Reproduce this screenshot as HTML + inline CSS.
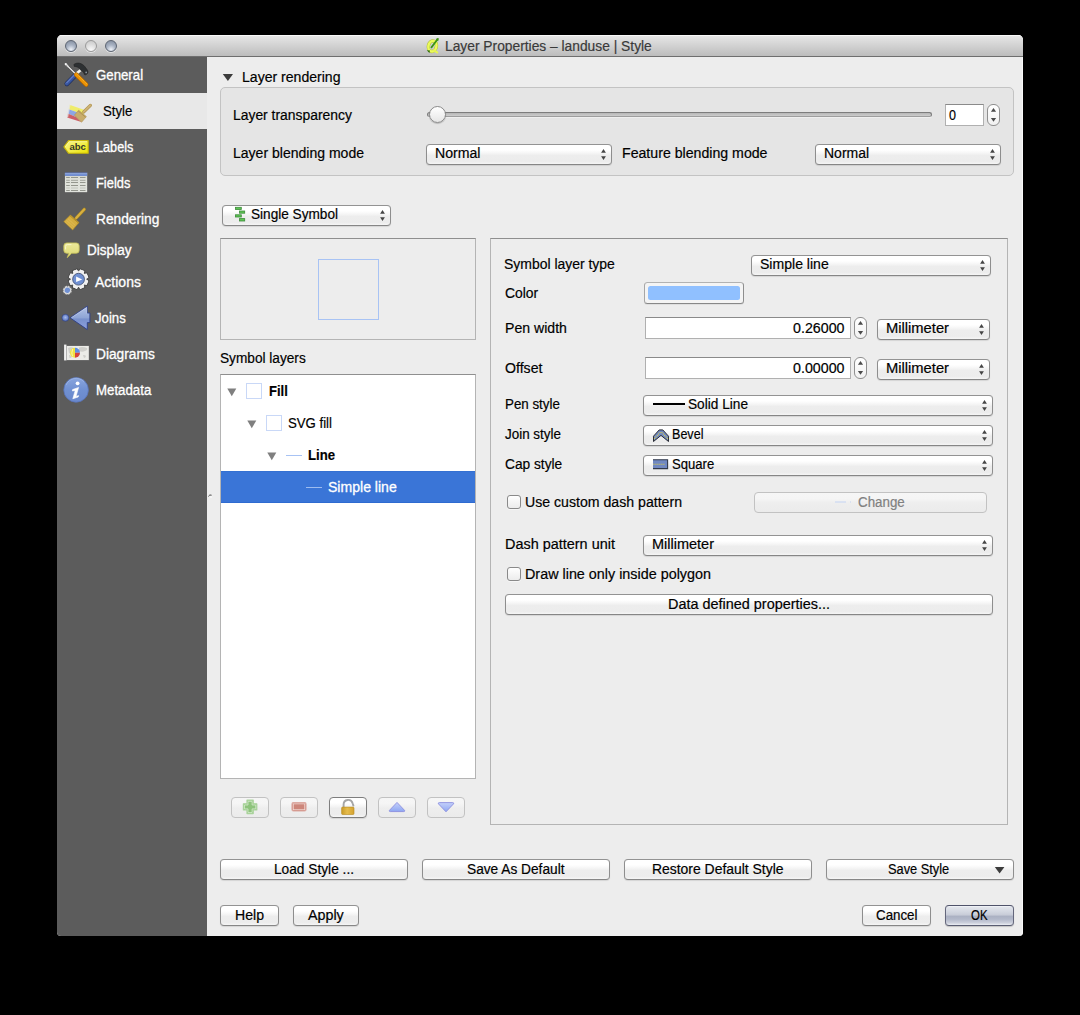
<!DOCTYPE html>
<html><head><meta charset="utf-8"><title>Layer Properties - landuse | Style</title>
<style>
html,body{margin:0;padding:0;background:#000;width:1080px;height:1015px;overflow:hidden}
body{font-family:"Liberation Sans",sans-serif;font-size:13px;position:relative}
.abs{position:absolute}
#win{position:absolute;left:57px;top:35px;width:966px;height:901px;background:#ededed;border-radius:5px 5px 4px 4px;overflow:hidden;box-shadow:inset -1px 0 0 #f8f8f8}
#tb{position:absolute;left:0;top:0;width:966px;height:22px;background:linear-gradient(#ebebeb 0,#e4e4e4 8%,#d0d0d0 55%,#bcbcbc 100%);box-shadow:inset 0 1px 0 #f8f8f8;border-bottom:1px solid #6e6e6e;box-sizing:border-box}
.tl{position:absolute;top:5px;width:12px;height:12px;border-radius:6px;box-sizing:border-box}
.tl.g{border:1px solid #5d6572;background:radial-gradient(circle at 50% 85%,#eef2f8 0,#aab4c4 45%,#7f8a9c 100%);box-shadow:0 1px 0 rgba(255,255,255,.5)}
.tl.e{border:1px solid #9a9a9a;background:radial-gradient(circle at 50% 90%,#fafafa 0,#dcdcdc 55%,#c6c6c6 100%);box-shadow:0 1px 0 rgba(255,255,255,.5)}
#sb{position:absolute;left:57px;top:57px;width:150px;height:879px;background:#5c5c5c;border-radius:0 0 0 4px}
#sel{position:absolute;left:57px;top:93px;width:150px;height:36px;background:#e8e8e8}
.t{position:absolute;white-space:nowrap;line-height:15px;height:15px;transform-origin:0 0;font-size:14px}
.t{-webkit-text-stroke:0.18px}.t.sb,.t.wb{-webkit-text-stroke:0.3px #fff}.t.sb{font-size:13.8px}
.grp{position:absolute;box-sizing:border-box;background:#e5e5e5;border:1px solid #c3c3c3;border-radius:5px}
.frm{position:absolute;box-sizing:border-box;border:1px solid #b4b4b4;border-top-color:#8f8f8f}
.frm.wht{background:#fff}
.cb{position:absolute;box-sizing:border-box;border:1px solid #8e8e8e;border-top-color:#939393;border-bottom-color:#868686;border-radius:4px;background:linear-gradient(#ffffff 0,#ffffff 26%,#f6f6f6 42%,#ededed 55%,#ececec 86%,#f5f5f5 100%);box-shadow:0 1px 1px rgba(0,0,0,.10)}
.cb.dis{border-color:#c2c2c2;background:linear-gradient(#f6f6f6 0,#f5f5f5 30%,#eeeeee 52%,#ebebeb 100%);box-shadow:none}
.cb.act{border-color:#7e7e7e}
.cb.ok{border-color:#50536a #64677c #5a5d72 #64677c;background:linear-gradient(#f4f6fa 0,#e1e4eb 8%,#d3d7e1 30%,#c7cbd7 48%,#aab0c2 53%,#b3b9ca 70%,#cbcfdb 88%,#eceef4 100%);box-shadow:0 1px 1px rgba(0,0,0,.18)}
.ar{position:absolute}
.inp{position:absolute;box-sizing:border-box;background:#fff;border:1px solid #b0b0b0;border-top-color:#8a8a8a}
.stp{position:absolute;box-sizing:border-box;border:1px solid #8f8f8f;border-radius:6px;background:linear-gradient(#fff,#f1f1f1)}
.chk{position:absolute;width:14px;height:14px;box-sizing:border-box;border:1px solid #8a8a8a;border-radius:3px;background:linear-gradient(#fff,#ececec);box-shadow:0 1px 0 rgba(255,255,255,.5)}
.trk{position:absolute;box-sizing:border-box;border-radius:2.5px;border:1px solid #7d7d7d;border-bottom-color:#9e9e9e;background:linear-gradient(#b6b6b6,#cdcdcd);box-shadow:0 1px 0 #efefef}
.knob{position:absolute;width:17px;height:17px;border-radius:9px;box-sizing:border-box;border:1px solid #8a8a8a;background:linear-gradient(#ffffff,#e6e6e6);box-shadow:0 1px 1px rgba(0,0,0,.2)}
</style></head>
<body>
<div id="win">
  <div id="tb">
    <div class="tl g" style="left:8px"></div><div class="tl e" style="left:28px"></div><div class="tl g" style="left:48px"></div>
  </div>
</div>
<div id="sb"></div><div id="sel"></div>
<div class="grp" style="left:220px;top:87px;width:794px;height:89px"></div>
<svg class="abs" style="left:222px;top:73px" width="12" height="9"><path d="M0.8 1 L11 1 L5.9 8 Z" fill="#3c3c3c"/></svg>
<div class="trk" style="left:427px;top:112px;width:505px;height:5px"></div>
<div class="knob" style="left:428.7px;top:106.4px"></div>
<div class="inp" style="left:945px;top:104px;width:39px;height:22px"></div>
<div class="stp" style="left:987px;top:104px;width:13px;height:22px"><svg style="position:absolute;left:2px;top:-1px" width="7" height="22" viewBox="0 0 7 22"><path d="M0.9 7.8 L3.5 4 L6.1 7.8 Z M0.9 14 L3.5 17.8 L6.1 14 Z" fill="#4a4a4a"/></svg></div>
<div class="cb " style="left:426px;top:144px;width:186px;height:21px"><svg class="ar" style="left:172.9px;top:0px" width="7" height="21" viewBox="0 0 7 21"><path d="M1.1 7.8 L3.5 4.1 L5.9 7.8 Z M1.1 11.2 L3.5 15 L5.9 11.2 Z" fill="#454545"/></svg></div>
<div class="cb " style="left:815px;top:144px;width:186px;height:21px"><svg class="ar" style="left:172.9px;top:0px" width="7" height="21" viewBox="0 0 7 21"><path d="M1.1 7.8 L3.5 4.1 L5.9 7.8 Z M1.1 11.2 L3.5 15 L5.9 11.2 Z" fill="#454545"/></svg></div>
<div class="cb " style="left:222px;top:205px;width:169px;height:21px"><svg class="ar" style="left:155.9px;top:0px" width="7" height="21" viewBox="0 0 7 21"><path d="M1.1 7.8 L3.5 4.1 L5.9 7.8 Z M1.1 11.2 L3.5 15 L5.9 11.2 Z" fill="#454545"/></svg></div>
<div class="frm" style="left:220px;top:238px;width:256px;height:102px"></div>
<div class="abs" style="left:318px;top:259px;width:61px;height:61px;border:1px solid #a8c3f4;box-sizing:border-box"></div>
<div class="frm wht" style="left:220px;top:374px;width:256px;height:405px"></div>
<div class="abs" style="left:221px;top:471px;width:254px;height:32px;background:#3a75d7;box-shadow:inset 0 1px 0 #3470d2, inset 0 -1px 0 #2f6bd0"></div>
<svg class="abs" style="left:227px;top:387.5px" width="10" height="9"><path d="M0.3 0.6 L9.3 0.6 L4.8 8.2 Z" fill="#7f7f7f"/></svg>
<svg class="abs" style="left:247px;top:419.5px" width="10" height="9"><path d="M0.3 0.6 L9.3 0.6 L4.8 8.2 Z" fill="#7f7f7f"/></svg>
<svg class="abs" style="left:267px;top:451.5px" width="10" height="9"><path d="M0.3 0.6 L9.3 0.6 L4.8 8.2 Z" fill="#7f7f7f"/></svg>
<div class="abs" style="left:246px;top:383px;width:16px;height:16px;box-sizing:border-box;border:1px solid #c9d8f7;background:#fff"></div>
<div class="abs" style="left:266px;top:415px;width:16px;height:16px;box-sizing:border-box;border:1px solid #c9d8f7;background:#fff"></div>
<div class="abs" style="left:286px;top:455px;width:16px;height:1px;background:#a8c3f4"></div>
<div class="abs" style="left:306px;top:487px;width:16px;height:1px;background:#9dbcf0"></div>
<div class="cb dis" style="left:231px;top:797px;width:38px;height:21px"></div>
<div class="cb dis" style="left:280px;top:797px;width:38px;height:21px"></div>
<div class="cb act" style="left:329px;top:797px;width:38px;height:21px"></div>
<div class="cb dis" style="left:378px;top:797px;width:38px;height:21px"></div>
<div class="cb dis" style="left:427px;top:797px;width:38px;height:21px"></div>
<div class="frm" style="left:490px;top:238px;width:518px;height:587px"></div>
<div class="cb " style="left:751px;top:255px;width:240px;height:21px"><svg class="ar" style="left:226.9px;top:0px" width="7" height="21" viewBox="0 0 7 21"><path d="M1.1 7.8 L3.5 4.1 L5.9 7.8 Z M1.1 11.2 L3.5 15 L5.9 11.2 Z" fill="#454545"/></svg></div>
<div class="cb" style="left:644px;top:282px;width:100px;height:22px;background:#f4f4f4;border-color:#b2b2b2 #8e8e8e #888 #a6a6a6;border-radius:3.5px;box-shadow:0 1px 0 rgba(0,0,0,.06)"><div style="position:absolute;left:3px;top:2.5px;right:2.6px;bottom:2.8px;background:#90c0ff;border-radius:2.5px"></div></div>
<div class="inp" style="left:645px;top:317px;width:206px;height:22px"></div>
<div class="stp" style="left:854px;top:317px;width:13px;height:22px"><svg style="position:absolute;left:2px;top:-1px" width="7" height="22" viewBox="0 0 7 22"><path d="M0.9 7.8 L3.5 4 L6.1 7.8 Z M0.9 14 L3.5 17.8 L6.1 14 Z" fill="#4a4a4a"/></svg></div>
<div class="cb " style="left:877px;top:319px;width:113px;height:21px"><svg class="ar" style="left:99.9px;top:0px" width="7" height="21" viewBox="0 0 7 21"><path d="M1.1 7.8 L3.5 4.1 L5.9 7.8 Z M1.1 11.2 L3.5 15 L5.9 11.2 Z" fill="#454545"/></svg></div>
<div class="inp" style="left:645px;top:357px;width:206px;height:22px"></div>
<div class="stp" style="left:854px;top:357px;width:13px;height:22px"><svg style="position:absolute;left:2px;top:-1px" width="7" height="22" viewBox="0 0 7 22"><path d="M0.9 7.8 L3.5 4 L6.1 7.8 Z M0.9 14 L3.5 17.8 L6.1 14 Z" fill="#4a4a4a"/></svg></div>
<div class="cb " style="left:877px;top:359px;width:113px;height:21px"><svg class="ar" style="left:99.9px;top:0px" width="7" height="21" viewBox="0 0 7 21"><path d="M1.1 7.8 L3.5 4.1 L5.9 7.8 Z M1.1 11.2 L3.5 15 L5.9 11.2 Z" fill="#454545"/></svg></div>
<div class="cb " style="left:643px;top:395px;width:350px;height:21px"><svg class="ar" style="left:336.9px;top:0px" width="7" height="21" viewBox="0 0 7 21"><path d="M1.1 7.8 L3.5 4.1 L5.9 7.8 Z M1.1 11.2 L3.5 15 L5.9 11.2 Z" fill="#454545"/></svg></div>
<div class="cb " style="left:643px;top:425px;width:350px;height:21px"><svg class="ar" style="left:336.9px;top:0px" width="7" height="21" viewBox="0 0 7 21"><path d="M1.1 7.8 L3.5 4.1 L5.9 7.8 Z M1.1 11.2 L3.5 15 L5.9 11.2 Z" fill="#454545"/></svg></div>
<div class="cb " style="left:643px;top:455px;width:350px;height:21px"><svg class="ar" style="left:336.9px;top:0px" width="7" height="21" viewBox="0 0 7 21"><path d="M1.1 7.8 L3.5 4.1 L5.9 7.8 Z M1.1 11.2 L3.5 15 L5.9 11.2 Z" fill="#454545"/></svg></div>
<div class="abs" style="left:653px;top:403px;width:32px;height:2px;background:#000"></div>
<div class="chk" style="left:507px;top:495px"></div>
<div class="cb dis" style="left:754px;top:492px;width:233px;height:21px"></div>
<div class="cb " style="left:643px;top:535px;width:350px;height:21px"><svg class="ar" style="left:336.9px;top:0px" width="7" height="21" viewBox="0 0 7 21"><path d="M1.1 7.8 L3.5 4.1 L5.9 7.8 Z M1.1 11.2 L3.5 15 L5.9 11.2 Z" fill="#454545"/></svg></div>
<div class="chk" style="left:507px;top:567px"></div>
<div class="cb " style="left:505px;top:594px;width:488px;height:21px"></div>
<div class="cb " style="left:220px;top:859px;width:188px;height:21px"></div>
<div class="cb " style="left:422px;top:859px;width:188px;height:21px"></div>
<div class="cb " style="left:624px;top:859px;width:188px;height:21px"></div>
<div class="cb " style="left:826px;top:859px;width:188px;height:21px"></div>
<svg class="abs" style="left:994px;top:866px" width="12" height="8"><path d="M0.8 1 L10.4 1 L5.6 7.4 Z" fill="#3c3c3c"/></svg>
<div class="cb " style="left:220px;top:905px;width:59px;height:21px"></div>
<div class="cb " style="left:293px;top:905px;width:66px;height:21px"></div>
<div class="cb " style="left:862px;top:905px;width:69px;height:21px"></div>
<div class="cb ok" style="left:945px;top:905px;width:69px;height:21px"></div>
<svg class="abs" style="left:0;top:0" width="1080" height="1015" viewBox="0 0 1080 1015">
<defs>
 <linearGradient id="gBlueH" x1="0" y1="0" x2="1" y2="1"><stop offset="0" stop-color="#6f8ad0"/><stop offset=".5" stop-color="#3c5aa6"/><stop offset="1" stop-color="#25407f"/></linearGradient>
 <linearGradient id="gOr" x1="0" y1="1" x2="1" y2="0"><stop offset="0" stop-color="#d87c00"/><stop offset=".6" stop-color="#f09a08"/><stop offset="1" stop-color="#f6b020"/></linearGradient>
 <linearGradient id="gTag" x1="0" y1="0" x2="1" y2="1"><stop offset="0" stop-color="#f8f588"/><stop offset=".5" stop-color="#f2ee50"/><stop offset="1" stop-color="#ebe300"/></linearGradient>
 <linearGradient id="gHdr" x1="0" y1="0" x2="0" y2="1"><stop offset="0" stop-color="#8aa4dc"/><stop offset="1" stop-color="#5f7fcc"/></linearGradient>
 <linearGradient id="gTbl" x1="0" y1="0" x2="0" y2="1"><stop offset="0" stop-color="#c9cbc3"/><stop offset=".35" stop-color="#dfe1da"/><stop offset="1" stop-color="#e2e4de"/></linearGradient>
 <linearGradient id="gArr" x1="0" y1="0" x2="0" y2="1"><stop offset="0" stop-color="#b4c4e6"/><stop offset=".5" stop-color="#8ea4d6"/><stop offset=".55" stop-color="#7890cc"/><stop offset="1" stop-color="#8ea0de"/></linearGradient>
 <radialGradient id="gDot" cx=".5" cy=".45" r=".6"><stop offset="0" stop-color="#a8bcec"/><stop offset=".6" stop-color="#6f88cc"/><stop offset="1" stop-color="#3c54a0"/></radialGradient>
 <linearGradient id="gInfo" x1="0" y1="0" x2="0" y2="1"><stop offset="0" stop-color="#8aa6de"/><stop offset=".5" stop-color="#7090d2"/><stop offset="1" stop-color="#6a88cc"/></linearGradient>
 <linearGradient id="gLock" x1="0" y1="0" x2="1" y2="0"><stop offset="0" stop-color="#c99a28"/><stop offset=".45" stop-color="#e6bc4c"/><stop offset="1" stop-color="#d4a230"/></linearGradient>
 <linearGradient id="gUp" x1="0" y1="0" x2="0" y2="1"><stop offset="0" stop-color="#c4d0fa"/><stop offset="1" stop-color="#8ea6f2"/></linearGradient>
 <linearGradient id="gBub" x1="0" y1="0" x2="0" y2="1"><stop offset="0" stop-color="#ece99a"/><stop offset="1" stop-color="#dcd872"/></linearGradient>
</defs>

<!-- title QGIS icon -->
<g>
 <ellipse cx="432.4" cy="46.2" rx="4" ry="5.3" fill="none" stroke="#aebb3c" stroke-width="3.4" transform="rotate(14 432.4 46.2)"/>
 <ellipse cx="432.4" cy="46.2" rx="4" ry="5.3" fill="none" stroke="#ebfa5c" stroke-width="2.5" transform="rotate(14 432.4 46.2)"/>
 <path d="M433.8 50.4 L437.2 52.4" stroke="#e6f452" stroke-width="2.2" stroke-linecap="round"/>
 <path d="M437.6 39.2 L431.4 47.4" stroke="#3c9414" stroke-width="1.8" stroke-linecap="round"/>
 <path d="M435.6 39 L438.6 38 L438.2 41.2 Z" fill="#3c9414"/>
 <path d="M426.8 50.2 L430 50.4 L429.4 53 Z" fill="#2a6a0c"/>
</g>

<!-- General: screwdriver + hammer -->
<g>
 <path d="M74.9 75.6 L66.9 83.7" stroke="#1d2c5c" stroke-width="4.8" stroke-linecap="round"/>
 <path d="M74.9 75.6 L66.9 83.7" stroke="url(#gBlueH)" stroke-width="3.6" stroke-linecap="round"/>
 <path d="M74.2 75.2 L67 82.6" stroke="#7d96d8" stroke-width="1" stroke-linecap="round" opacity=".8"/>
 <path d="M76.3 73.7 L80.4 70.2" stroke="#f2f2ea" stroke-width="2.6"/>
 <path d="M73.9 64.4 C77.4 62 82 63 84.8 66.6 C86.2 68.6 88 70.4 88 72 C87.9 73.8 85.8 75.4 84.4 74.6 C84 72.4 82.4 71.4 80.6 69.6 C78.8 67.6 76.8 66.4 74.2 66.4 Z" fill="#2d3032" stroke="#222" stroke-width=".6"/>
 <circle cx="86.2" cy="72.4" r=".9" fill="#8a959c"/>
 <path d="M65.7 64 L67.9 66.3" stroke="#f4f4f4" stroke-width="2.1" stroke-linecap="round"/>
 <path d="M66.6 65 L75.4 73.8" stroke="#3a3a3a" stroke-width="2.2"/>
 <path d="M66.6 65 L75.4 73.8" stroke="#eeeeee" stroke-width="1.3"/>
 <path d="M76.2 74.6 L86.2 84.6" stroke="#a85e00" stroke-width="4.4" stroke-linecap="round"/>
 <path d="M76.2 74.6 L86.2 84.6" stroke="url(#gOr)" stroke-width="3.4" stroke-linecap="round"/>
 <path d="M77.6 74.6 L86.8 83.8" stroke="#f8c040" stroke-width=".9" stroke-dasharray="1.2 .8" opacity=".9"/>
</g>

<!-- Style: paint stripes + brush -->
<g>
 <path d="M69.4 104.8 L84.6 109.9 L83.4 114.4 L68.6 109.3 Z" fill="#efec6a"/>
 <path d="M68.6 109.3 L80 113.2 L76.6 117.2 L67.7 113.6 Z" fill="#8da6e4"/>
 <path d="M67.7 113.6 L76.6 117.2 L81.4 122 L67 117.4 Z" fill="#cc5f66"/>
 <path d="M69.4 104.8 L67 117.4" stroke="#e8e8e8" stroke-width="2.2" opacity=".75"/>
 <path d="M83.8 111.8 L90.4 105.3" stroke="#a98c46" stroke-width="3.1" stroke-linecap="round"/>
 <path d="M83.8 111.8 L90.4 105.3" stroke="#cdb274" stroke-width="2.1" stroke-linecap="round"/>
 <path d="M78.6 110.2 L86.4 116.6 L81.6 122.2 L74.4 115.2 Z" fill="#c9ad6c" stroke="#b09452" stroke-width=".6"/>
 <path d="M78.2 111 L85.6 117.2" stroke="#ad914e" stroke-width=".9"/>
</g>

<!-- Labels tag -->
<g>
 <path d="M63.9 146.9 L68.6 140.6 L88.2 140.6 L88.2 153.3 L68.6 153.3 Z" fill="url(#gTag)" stroke="#c8b60a" stroke-width="1.1" stroke-linejoin="round"/>
 <path d="M65.2 146.9 L69.1 141.7 L87.1 141.7" fill="none" stroke="#fbf9b0" stroke-width=".8" opacity=".9"/>
 <text x="69.4" y="149.8" font-family="Liberation Sans, sans-serif" font-weight="700" font-size="9.4" fill="#33352a" textLength="16.4" lengthAdjust="spacingAndGlyphs">abc</text>
</g>

<!-- Fields table -->
<g>
 <rect x="64.4" y="172" width="23.2" height="20.6" fill="#4e4e4e" opacity=".55"/>
 <rect x="64.9" y="172.3" width="22.3" height="19.9" fill="url(#gTbl)"/>
 <rect x="64.9" y="172.2" width="22.3" height="1" fill="#4a5a8c"/>
 <rect x="64.9" y="173.1" width="22.3" height="2.8" fill="url(#gHdr)"/>
 <g stroke="#8b8d85" stroke-width=".9">
  <path d="M66.2 177.5h3.6M71 177.5h7M80 177.5h5.5"/>
  <path d="M66.2 180.3h3.6M71 180.3h7M80 180.3h5.5" opacity=".8"/>
  <path d="M66.2 182.5h3.6M71 182.5h7M80 182.5h5.5"/>
  <path d="M66.2 185.5h3.6M71 185.5h7M80 185.5h5.5"/>
  <path d="M66.2 188h3.6M71 188h7M80 188h5.5" opacity=".4"/>
  <path d="M66.2 190.5h3.6M71 190.5h7M80 190.5h5.5"/>
 </g>
</g>

<!-- Rendering brush -->
<g>
 <path d="M76.2 218 L84.3 209.3" stroke="#a8841c" stroke-width="3.2" stroke-linecap="round"/>
 <path d="M76.2 218 L84.3 209.3" stroke="#d8b040" stroke-width="2.2" stroke-linecap="round"/>
 <path d="M70.4 215 L79 222.4 L72.7 230 L63.8 221.6 Z" fill="#d6ae40" stroke="#b08a20" stroke-width=".6"/>
 <path d="M70 215.8 L78.4 223" stroke="#b48e24" stroke-width="1"/>
 <path d="M65 221.8 L72.6 228.8 M66.4 220.2 L74 227.2 M67.8 218.6 L75.4 225.6" stroke="#e6c868" stroke-width=".6" opacity=".8"/>
</g>

<!-- Display bubble -->
<g>
 <path d="M66.8 242.9 H76.2 Q79.2 242.9 79.2 245.9 V250.3 Q79.2 253.3 76.2 253.3 H71.6 L67.2 257.7 L68.8 253.3 H66.8 Q63.8 253.3 63.8 250.3 V245.9 Q63.8 242.9 66.8 242.9 Z" fill="url(#gBub)" stroke="#c2bc58" stroke-width=".8"/>
 <path d="M65.6 249 V246.4 Q65.6 244.6 67.4 244.6 H71" fill="none" stroke="#f8f6cc" stroke-width="1" stroke-linecap="round"/>
</g>

<!-- Actions gears -->
<g>
 <g transform="translate(78.56 279.2) rotate(22.5)">
  <g fill="#f0f0f0" stroke="#454545" stroke-width="1"><path id="gt" d="M-2.5 -10.1 L2.5 -10.1 L3.3 -7 L-3.3 -7 Z"/><use href="#gt" transform="rotate(45)"/><use href="#gt" transform="rotate(90)"/><use href="#gt" transform="rotate(135)"/><use href="#gt" transform="rotate(180)"/><use href="#gt" transform="rotate(225)"/><use href="#gt" transform="rotate(270)"/><use href="#gt" transform="rotate(315)"/></g>
  <circle r="8.3" fill="#f0f0f0" stroke="#454545" stroke-width=".9"/>
  <g fill="#f0f0f0"><path id="gt2" d="M-2.1 -9.7 L2.1 -9.7 L2.9 -6.6 L-2.9 -6.6 Z"/><use href="#gt2" transform="rotate(45)"/><use href="#gt2" transform="rotate(90)"/><use href="#gt2" transform="rotate(135)"/><use href="#gt2" transform="rotate(180)"/><use href="#gt2" transform="rotate(225)"/><use href="#gt2" transform="rotate(270)"/><use href="#gt2" transform="rotate(315)"/></g>
 </g>
 <circle cx="78.56" cy="279.2" r="5.9" fill="#7090d2" stroke="#3c4a6c" stroke-width=".8"/>
 <path d="M76.1 276.5 L82.2 279.4 L76.1 282.1 Z" fill="#fff"/>
 <g transform="translate(67.4 290.3) rotate(22.5)">
  <g fill="#dedede" stroke="#555" stroke-width=".5"><path id="st" d="M-1.2 -4.6 L1.2 -4.6 L1.6 -3 L-1.6 -3 Z"/><use href="#st" transform="rotate(45)"/><use href="#st" transform="rotate(90)"/><use href="#st" transform="rotate(135)"/><use href="#st" transform="rotate(180)"/><use href="#st" transform="rotate(225)"/><use href="#st" transform="rotate(270)"/><use href="#st" transform="rotate(315)"/></g>
  <circle r="3.7" fill="#dedede"/>
  <circle r="2.7" fill="#7090d2"/>
 </g>
</g>

<!-- Joins arrow -->
<g>
 <circle cx="65.4" cy="317.8" r="3.5" fill="url(#gDot)" stroke="#2c3e80" stroke-width=".5"/>
 <path d="M70 317.8 L87.3 306.1 L87.3 313 L89.9 313 L89.9 322.6 L87.3 322.6 L87.3 329.6 Z" fill="url(#gArr)" stroke="#2e4088" stroke-width=".9" stroke-linejoin="round"/>
 <path d="M71.5 317.6 L86.6 307.6 L86.6 313.4" fill="none" stroke="#ccd8f0" stroke-width=".7" opacity=".8"/>
</g>

<!-- Diagrams -->
<g>
 <rect x="63.7" y="344.3" width="3.1" height="16.5" fill="#6e6e6e" opacity=".5"/>
 <rect x="66.4" y="345.6" width="22.8" height="14.9" fill="#8a8a8a" opacity=".6"/>
 <rect x="64.1" y="344.6" width="2.3" height="15.8" fill="#f2f2f2"/>
 <rect x="66.8" y="346" width="22" height="14" fill="#ecece8"/>
 <path d="M68 348 q3 -1.4 6 0 q1 2 -1 4 q-2 3 -4 1 Z M79 347.5 q4 -1 8 .5 q1 2 -2 3 q-3 1.5 -6 0 Z M83 355 q2 -.5 3 1 q-.5 2 -2 2 Z M69 355 q2 -.5 3 1.5 q-1 2 -2.5 1.5 Z" fill="#d0d0cc"/>
 <path d="M75 352.7 L75 347.7 A5 5 0 0 0 75 357.7 Z" fill="#f0e240"/>
 <path d="M72.6 349 Q71.2 352.6 72.6 356.4" stroke="#f8f2a0" stroke-width="1.2" fill="none"/>
 <path d="M75 352.7 L75 347.7 A5 5 0 0 1 80 352.7 Z" fill="#5f90e4"/>
 <path d="M75 352.7 L80 352.7 A5 5 0 0 1 75 357.7 Z" fill="#d4423c"/>
</g>

<!-- Metadata info -->
<g>
 <circle cx="76.1" cy="389.9" r="12.3" fill="url(#gInfo)" stroke="#5874ba" stroke-width=".8"/>
 <path d="M66 385 A11 11 0 0 1 84 381.6" fill="none" stroke="#a4baea" stroke-width="1" opacity=".7"/>
 <circle cx="77.6" cy="383.3" r="1.9" fill="#fff"/>
 <path d="M72.6 389.6 L78.6 387.4 L76 396.4 L78.6 395.6 L78.2 397 L72.8 398.8 L75.2 390.4 L72.4 391 Z" fill="#fff" stroke="#fff" stroke-width=".6" stroke-linejoin="round"/>
</g>

<!-- Single Symbol icon -->
<g fill="#5ec354" stroke="#3c8c3a" stroke-width=".8">
 <rect x="235.5" y="207.3" width="5.8" height="2.2"/>
 <rect x="239.5" y="211" width="5.2" height="2.2"/>
 <rect x="235.5" y="214.8" width="5.8" height="2.2"/>
 <rect x="239.5" y="218.6" width="5.2" height="2.4"/>
</g>

<!-- Bevel icon -->
<g>
 <path d="M653.5 441.5 L653.5 436.2 L659.2 429.9 L662.8 429.9 L668.5 436.2 L668.5 441.5 L661 435.4 Z" fill="#7088c2" stroke="#2a2c34" stroke-width="1" stroke-linejoin="miter"/>
 <path d="M654.2 438.8 L660 432.6 L662 432.6 L667.8 438.8" fill="none" stroke="#e4d640" stroke-width="1.1" stroke-dasharray="1 1"/>
</g>
<!-- Square icon -->
<g>
 <rect x="653" y="459.8" width="14.6" height="8.8" fill="#7088c2"/>
 <path d="M653 459.8 H667.6 V468.6 H653" fill="none" stroke="#30384a" stroke-width="1.1"/>
 <path d="M653.4 464.2 H664.4" stroke="#e4d640" stroke-width="1.1" stroke-dasharray="1 1"/>
</g>

<!-- tree buttons icons -->
<g>
 <path d="M247 800.2 H253.2 V803.8 H256.8 V810 H253.2 V813.6 H247 V810 H243.4 V803.8 H247 Z" fill="#8ec47c" stroke="#a9d39b" stroke-width="1.2" stroke-linejoin="round"/>
 <path d="M248 801.4 H252.1 V805 H255.7 V808.9 H252.1 V812.5 H248 V808.9 H244.5 V805 H248 Z" fill="none" stroke="#e6f3df" stroke-width=".7" opacity=".9"/>
 <rect x="292" y="802.6" width="14" height="8.4" rx="1.4" fill="#cd867a" stroke="#dcaaa2" stroke-width="1.2"/>
 <rect x="293.3" y="803.9" width="11.4" height="5.8" fill="none" stroke="#f3dcd8" stroke-width=".7"/>
 <path d="M343.6 807.2 V804.6 A4.6 4.6 0 0 1 352.6 803.2 L353.4 805.6" fill="none" stroke="#a6a6a6" stroke-width="1.9" stroke-linecap="round"/>
 <rect x="341.6" y="807.1" width="12.4" height="7.4" rx="1" fill="url(#gLock)" stroke="#b88c20" stroke-width=".6"/>
 <path d="M397 802.4 L404.6 810.4 Q405 811.6 403.6 811.6 H390.4 Q389 811.6 389.4 810.4 Z" fill="url(#gUp)" stroke="#8284dc" stroke-width=".8" stroke-linejoin="round"/>
 <path d="M446 811.8 L453.6 803.8 Q454 802.6 452.6 802.6 H439.4 Q438 802.6 438.4 803.8 Z" fill="url(#gUp)" stroke="#8284dc" stroke-width=".8" stroke-linejoin="round"/>
</g>
<!-- Change btn faint icon & cursor artefact -->
<path d="M835 502 H846" stroke="#c4d4f4" stroke-width="1"/><rect x="850" y="501.5" width="1" height="1" fill="#c4d4f4"/>
<path d="M208.4 496.4 Q209.6 494.2 211.6 495.2" fill="none" stroke="#4a4a4a" stroke-width="1"/><circle cx="211" cy="497" r="1.1" fill="#f8f8f8"/>
</svg>

<div class="t" style="left:444.80px;top:38.60px;color:#3a3a3a;font-weight:400;transform:scaleX(0.9853)">Layer Properties – landuse | Style</div>
<div class="t sb" style="left:96.00px;top:67.90px;color:#ffffff;font-weight:400;transform:scaleX(0.9592)">General</div>
<div class="t" style="left:103.10px;top:104.00px;color:#000000;font-weight:400;transform:scaleX(0.9382)">Style</div>
<div class="t sb" style="left:96.30px;top:139.90px;color:#ffffff;font-weight:400;transform:scaleX(0.9195)">Labels</div>
<div class="t sb" style="left:96.30px;top:175.90px;color:#ffffff;font-weight:400;transform:scaleX(0.9341)">Fields</div>
<div class="t sb" style="left:96.30px;top:211.90px;color:#ffffff;font-weight:400;transform:scaleX(0.9955)">Rendering</div>
<div class="t sb" style="left:87.20px;top:242.90px;color:#ffffff;font-weight:400;transform:scaleX(0.9834)">Display</div>
<div class="t sb" style="left:95.20px;top:274.90px;color:#ffffff;font-weight:400;transform:scaleX(1.0162)">Actions</div>
<div class="t sb" style="left:94.90px;top:310.90px;color:#ffffff;font-weight:400;transform:scaleX(0.9559)">Joins</div>
<div class="t sb" style="left:96.40px;top:346.90px;color:#ffffff;font-weight:400;transform:scaleX(0.9958)">Diagrams</div>
<div class="t sb" style="left:96.40px;top:382.90px;color:#ffffff;font-weight:400;transform:scaleX(0.9611)">Metadata</div>
<div class="t" style="left:241.70px;top:70.00px;color:#000000;font-weight:400;transform:scaleX(1.0045)">Layer rendering</div>
<div class="t" style="left:233.20px;top:108.00px;color:#000000;font-weight:400;transform:scaleX(0.9917)">Layer transparency</div>
<div class="t" style="left:233.20px;top:146.00px;color:#000000;font-weight:400;transform:scaleX(1.0018)">Layer blending mode</div>
<div class="t" style="left:434.70px;top:146.00px;color:#000000;font-weight:400;transform:scaleX(1.0083)">Normal</div>
<div class="t" style="left:621.70px;top:146.00px;color:#000000;font-weight:400;transform:scaleX(1.0104)">Feature blending mode</div>
<div class="t" style="left:824.10px;top:146.00px;color:#000000;font-weight:400;transform:scaleX(0.9994)">Normal</div>
<div class="t" style="left:949.00px;top:108.00px;color:#000000;font-weight:400;transform:scaleX(0.8978)">0</div>
<div class="t" style="left:251.00px;top:207.00px;color:#000000;font-weight:400;transform:scaleX(0.9721)">Single Symbol</div>
<div class="t" style="left:220.00px;top:350.50px;color:#000000;font-weight:400;transform:scaleX(0.9753)">Symbol layers</div>
<div class="t" style="left:268.75px;top:384.00px;color:#000000;font-weight:700;transform:scaleX(0.9266)">Fill</div>
<div class="t" style="left:288.00px;top:416.00px;color:#000000;font-weight:400;transform:scaleX(0.9424)">SVG fill</div>
<div class="t" style="left:308.00px;top:448.00px;color:#000000;font-weight:700;transform:scaleX(0.9381)">Line</div>
<div class="t wb" style="left:328.00px;top:480.00px;color:#ffffff;font-weight:400;transform:scaleX(1.0039)">Simple line</div>
<div class="t" style="left:504.25px;top:257.00px;color:#000000;font-weight:400;transform:scaleX(0.9961)">Symbol layer type</div>
<div class="t" style="left:760.00px;top:257.00px;color:#000000;font-weight:400;transform:scaleX(1.0039)">Simple line</div>
<div class="t" style="left:504.80px;top:286.00px;color:#000000;font-weight:400;transform:scaleX(0.9920)">Color</div>
<div class="t" style="left:504.60px;top:321.00px;color:#000000;font-weight:400;transform:scaleX(1.0068)">Pen width</div>
<div class="t" style="left:792.50px;top:321.00px;color:#000000;font-weight:400;transform:scaleX(1.0176)">0.26000</div>
<div class="t" style="left:885.50px;top:321.00px;color:#000000;font-weight:400;transform:scaleX(1.0519)">Millimeter</div>
<div class="t" style="left:504.70px;top:361.00px;color:#000000;font-weight:400;transform:scaleX(1.0083)">Offset</div>
<div class="t" style="left:792.50px;top:361.00px;color:#000000;font-weight:400;transform:scaleX(1.0176)">0.00000</div>
<div class="t" style="left:885.50px;top:361.00px;color:#000000;font-weight:400;transform:scaleX(1.0519)">Millimeter</div>
<div class="t" style="left:504.60px;top:397.00px;color:#000000;font-weight:400;transform:scaleX(0.9532)">Pen style</div>
<div class="t" style="left:688.00px;top:397.00px;color:#000000;font-weight:400;transform:scaleX(0.9756)">Solid Line</div>
<div class="t" style="left:504.60px;top:427.00px;color:#000000;font-weight:400;transform:scaleX(0.9579)">Join style</div>
<div class="t" style="left:672.00px;top:427.00px;color:#000000;font-weight:400;transform:scaleX(0.8978)">Bevel</div>
<div class="t" style="left:504.80px;top:457.00px;color:#000000;font-weight:400;transform:scaleX(0.9801)">Cap style</div>
<div class="t" style="left:672.00px;top:457.00px;color:#000000;font-weight:400;transform:scaleX(0.9356)">Square</div>
<div class="t" style="left:524.70px;top:495.00px;color:#000000;font-weight:400;transform:scaleX(1.0087)">Use custom dash pattern</div>
<div class="t" style="left:857.50px;top:495.00px;color:#808080;font-weight:400;transform:scaleX(0.9532)">Change</div>
<div class="t" style="left:504.60px;top:537.00px;color:#000000;font-weight:400;transform:scaleX(1.0307)">Dash pattern unit</div>
<div class="t" style="left:651.70px;top:537.00px;color:#000000;font-weight:400;transform:scaleX(1.0352)">Millimeter</div>
<div class="t" style="left:524.70px;top:567.00px;color:#000000;font-weight:400;transform:scaleX(1.0258)">Draw line only inside polygon</div>
<div class="t" style="left:667.50px;top:597.00px;color:#000000;font-weight:400;transform:scaleX(1.0304)">Data defined properties...</div>
<div class="t" style="left:273.50px;top:862.00px;color:#000000;font-weight:400;transform:scaleX(0.9790)">Load Style ...</div>
<div class="t" style="left:467.00px;top:862.00px;color:#000000;font-weight:400;transform:scaleX(0.9787)">Save As Default</div>
<div class="t" style="left:651.70px;top:862.00px;color:#000000;font-weight:400;transform:scaleX(0.9940)">Restore Default Style</div>
<div class="t" style="left:888.00px;top:862.00px;color:#000000;font-weight:400;transform:scaleX(0.9150)">Save Style</div>
<div class="t" style="left:234.70px;top:908.00px;color:#000000;font-weight:400;transform:scaleX(1.0071)">Help</div>
<div class="t" style="left:308.00px;top:908.00px;color:#000000;font-weight:400;transform:scaleX(1.0205)">Apply</div>
<div class="t" style="left:875.50px;top:908.00px;color:#000000;font-weight:400;transform:scaleX(0.9520)">Cancel</div>
<div class="t" style="left:970.50px;top:908.00px;color:#000000;font-weight:400;transform:scaleX(0.8154)">OK</div>
</body></html>
